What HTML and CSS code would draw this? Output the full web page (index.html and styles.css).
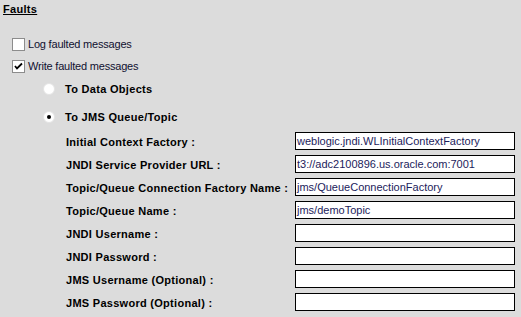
FILE: index.html
```html
<!DOCTYPE html>
<html lang="en">
<head>
  <meta charset="UTF-8" />
  <title>Faults</title>
  <link rel="stylesheet" href="styles.css">
</head>
<body>
  <div class="section-title">Faults</div>

  <div class="check-row">
    <span class="checkbox"></span>
    <span>Log faulted messages</span>
  </div>
  <div class="check-row">
    <span class="checkbox checked">
      <svg width="9" height="9" viewBox="0 0 9 9"><path d="M1 4 L3 6.5 L8 1.5" fill="none" stroke="#000" stroke-width="1.8"/></svg>
    </span>
    <span>Write faulted messages</span>
  </div>

  <div class="radio-row first">
    <span class="radio"></span>
    <span>To Data Objects</span>
  </div>
  <div class="radio-row">
    <span class="radio selected"></span>
    <span>To JMS Queue/Topic</span>
  </div>

  <div class="fields">
    <label>Initial Context Factory :</label>
    <div class="field">weblogic.jndi.WLInitialContextFactory</div>
    <label>JNDI Service Provider URL :</label>
    <div class="field">t3://adc2100896.us.oracle.com:7001</div>
    <label>Topic/Queue Connection Factory Name :</label>
    <div class="field">jms/QueueConnectionFactory</div>
    <label>Topic/Queue Name :</label>
    <div class="field">jms/demoTopic</div>
    <label>JNDI Username :</label>
    <div class="field"></div>
    <label>JNDI Password :</label>
    <div class="field"></div>
    <label>JMS Username (Optional) :</label>
    <div class="field"></div>
    <label>JMS Password (Optional) :</label>
    <div class="field"></div>
  </div>
</body>
</html>
```

FILE: styles.css
```css
body {
  margin: 0;
  background-color: #dcdcdc;
  font-family: 'Liberation Sans', Arial, sans-serif;
  font-size: 11px;
  color: #000;
}

.section-title {
  font-weight: bold;
  text-decoration: underline;
  letter-spacing: 0.3px;
  padding-left: 3px;
  height: 17px;
  line-height: 18px;
  margin-bottom: 16px;
}

.check-row {
  display: flex;
  align-items: center;
  height: 22px;
  padding-left: 12px;
  color: #101030;
  letter-spacing: -0.2px;
}

.checkbox {
  width: 11px;
  height: 11px;
  border: 1px solid #8c8c8c;
  background: #fff;
  margin-right: 3px;
  display: flex;
  align-items: center;
  justify-content: center;
}

.radio-row {
  display: flex;
  align-items: center;
  height: 21px;
  padding-left: 43px;
  font-weight: bold;
  letter-spacing: 0.3px;
  margin-top: 7px;
}

.radio-row.first {
  margin-top: 1px;
}

.radio {
  width: 10px;
  height: 10px;
  border: 1px solid #e4e4e4;
  border-radius: 50%;
  background: #fff;
  margin-right: 10px;
  display: flex;
  align-items: center;
  justify-content: center;
}

.radio.selected::after {
  content: '';
  width: 4px;
  height: 4px;
  border-radius: 50%;
  background: #000;
}

.fields {
  display: grid;
  grid-template-columns: 229px 220px;
  grid-auto-rows: 18px;
  row-gap: 5px;
  padding-left: 66px;
  margin-top: 5px;
}

.fields label {
  font-weight: bold;
  letter-spacing: 0.28px;
  line-height: 20px;
  white-space: nowrap;
}

.field {
  box-sizing: border-box;
  border: 1px solid #000;
  background: #fff;
  color: #1c1c5c;
  line-height: 16px;
  padding-left: 1px;
  white-space: nowrap;
  overflow: hidden;
}
```
